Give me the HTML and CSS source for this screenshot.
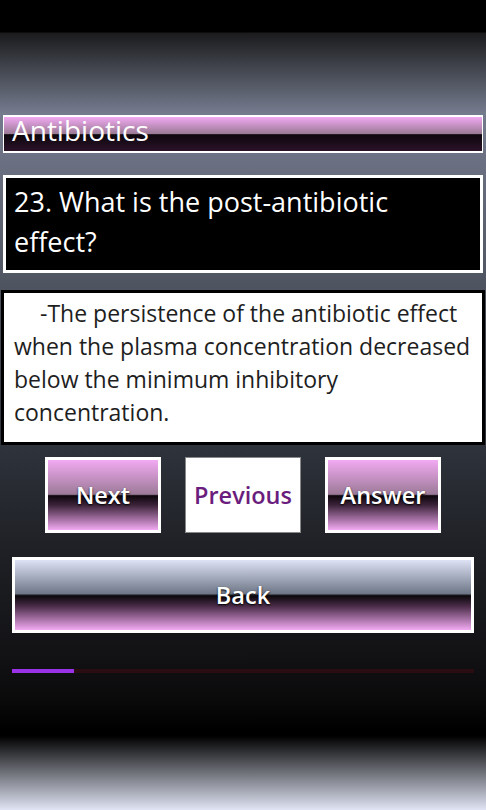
FILE: index.html
```html
<!DOCTYPE html>
<html lang="en">
<head>
    <meta charset="UTF-8">
    <meta name="viewport" content="width=device-width, initial-scale=1.0">
    <title>Antibiotics</title>
    <link rel="stylesheet" href="styles.css">
</head>
<body>

    <div class="page">
        <div class="top-space"></div>

        <div class="title-bar">Antibiotics</div>

        <div class="question">23. What is the post-antibiotic effect?</div>

        <div class="answer">-The persistence of the antibiotic effect when the plasma concentration decreased below the minimum inhibitory concentration.</div>

        <div class="nav">
            <button class="btn glossy">Next</button>
            <button class="btn plain">Previous</button>
            <button class="btn glossy">Answer</button>
        </div>

        <button class="back">Back</button>

        <div class="progress">
            <div class="progress-fill" style="width: 62px"></div>
        </div>
    </div>

</body>
</html>
```

FILE: styles.css
```css
body {
    margin: 0;
    font-family: "Open Sans", "Noto Sans", sans-serif;
    background: #000;
}
.page {
    width: 486px;
    height: 810px;
    display: flex;
    flex-direction: column;
    background: linear-gradient(to bottom,
        #000 0, #000 32px, #1b1b1d 33px, #747b8d 113px,
        #6b7182 160px, #4e5460 285px, #2c3038 460px,
        #1f2126 545px, #131316 650px, #0a0a0b 700px,
        #000 730px, #000 736px, #e0e4f4 810px);
}
.top-space {
    height: 115px;
}
.title-bar {
    margin: 0 3px;
    height: 34px;
    border: 2px solid #fff;
    border-width: 2px 1px;
    background: linear-gradient(#f2aaf2, #9a7a95 49%, #0d070d 52%, #2b1229 100%);
    color: #fff;
    font-size: 28px;
    line-height: 26px;
    padding-left: 8px;
}
.question {
    margin: 22px 3px 0;
    height: 98px;
    border: 3px solid #fff;
    background: #000;
    color: #fff;
    font-size: 27px;
    line-height: 40px;
    padding: 4px 8px 0;
    box-sizing: border-box;
}
.answer {
    margin: 17px 1px 0;
    height: 155px;
    border: 3px solid #000;
    background: #fff;
    color: #1e1e1e;
    font-size: 23px;
    line-height: 33px;
    padding: 4px 4px 0 10px;
    text-indent: 26px;
    box-sizing: border-box;
}
.nav {
    display: flex;
    gap: 24px;
    margin: 12px 45px 0;
}
.btn {
    width: 116px;
    height: 76px;
    font-family: "Open Sans", "Noto Sans", sans-serif;
    font-size: 23.5px;
    font-weight: 600;
    padding: 0;
    cursor: pointer;
}
.glossy {
    border: 3px solid #fff;
    background: linear-gradient(#f2aaf2, #9c7a98 49%, #0c060c 51%, #3a2238 64%, #f2aaf2 100%);
    color: #fff;
    text-shadow: 0 1px 2px #000;
}
.plain {
    border: 1px solid #888;
    background: #fff;
    color: #6b1d7e;
}
.back {
    margin: 24px 12px 0;
    height: 76px;
    border: 3px solid #fff;
    background: linear-gradient(#dde2f4, #6e7787 48%, #0a080c 51%, #4a2c48 66%, #f2aaf2 100%);
    color: #fff;
    font-family: "Open Sans", "Noto Sans", sans-serif;
    font-size: 23.5px;
    font-weight: 600;
    text-shadow: 0 1px 2px #000;
    cursor: pointer;
}
.progress {
    margin: 36px 12px 0;
    height: 4px;
    background: #2a0d10;
}
.progress-fill {
    height: 4px;
    background: #9932e6;
}
```
